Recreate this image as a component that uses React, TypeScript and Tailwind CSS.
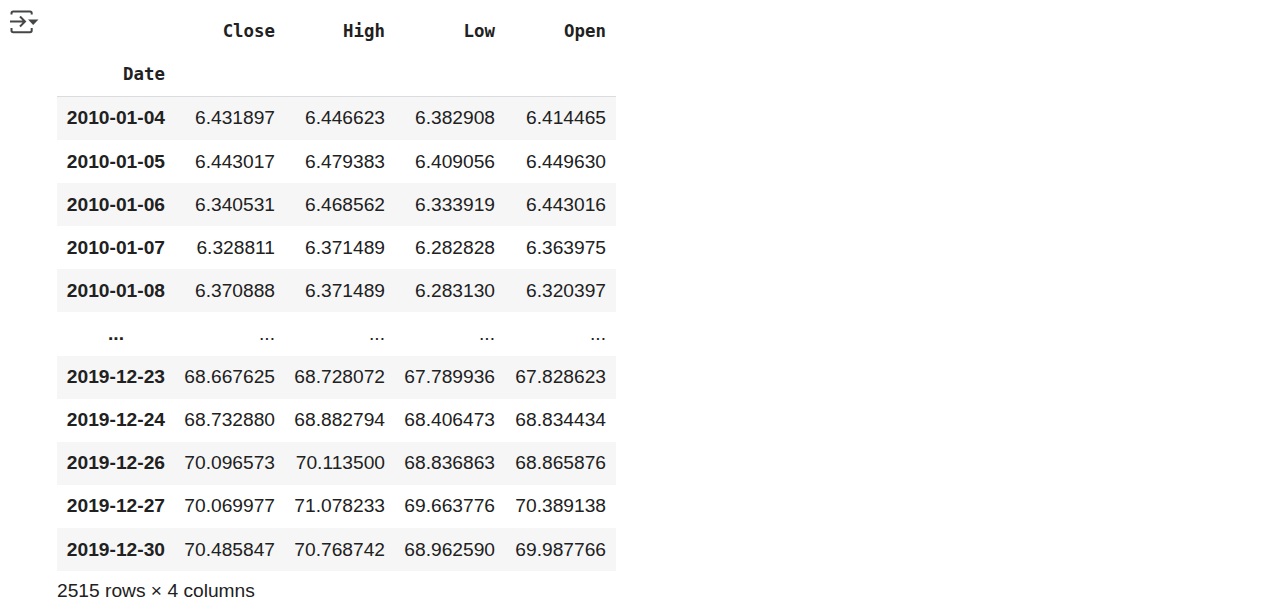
const columns = ["Close", "High", "Low", "Open"];

const firstRows = [
  ["2010-01-04", "6.431897", "6.446623", "6.382908", "6.414465"],
  ["2010-01-05", "6.443017", "6.479383", "6.409056", "6.449630"],
  ["2010-01-06", "6.340531", "6.468562", "6.333919", "6.443016"],
  ["2010-01-07", "6.328811", "6.371489", "6.282828", "6.363975"],
  ["2010-01-08", "6.370888", "6.371489", "6.283130", "6.320397"],
];

const lastRows = [
  ["2019-12-23", "68.667625", "68.728072", "67.789936", "67.828623"],
  ["2019-12-24", "68.732880", "68.882794", "68.406473", "68.834434"],
  ["2019-12-26", "70.096573", "70.113500", "68.836863", "68.865876"],
  ["2019-12-27", "70.069977", "71.078233", "69.663776", "70.389138"],
  ["2019-12-30", "70.485847", "70.768742", "68.962590", "69.987766"],
];

function OutputIcon() {
  return (
    <svg width="30" height="24" viewBox="0 0 30 24" fill="none" className="block">
      <path d="M1.5 4.5V3.2C1.5 2.2 2.2 1.5 3.2 1.5H20C21 1.5 21.7 2.2 21.7 3.2V4.5" stroke="#444746" strokeWidth="2" />
      <path d="M1.5 18V20.6C1.5 21.6 2.2 22.3 3.2 22.3H20C21 22.3 21.7 21.6 21.7 20.6V18" stroke="#444746" strokeWidth="2" />
      <path d="M0 11.5H14.5M10 6.5L15 11.5L10 16.5" stroke="#444746" strokeWidth="2" />
      <path d="M18 9.5H28.5L23.2 15Z" fill="#444746" />
    </svg>
  );
}

// low: the reference rounds some rows' text one pixel further down
function DataRow({ row, shaded, low }: { row: string[]; shaded: boolean; low: boolean }) {
  const pad = low ? "pt-[2px] pr-2.5 text-right whitespace-nowrap" : "pr-2.5 text-right whitespace-nowrap";
  return (
    <tr className={shaded ? "h-[43px] bg-[#f6f6f6]" : "h-[43px]"}>
      {row.map((cell, i) =>
        i === 0 ? (
          <th key={i} className={pad + " font-bold"}>{cell}</th>
        ) : (
          <td key={i} className={pad}>{cell}</td>
        )
      )}
    </tr>
  );
}

export default function App() {
  return (
    <div className="flex h-[606px] w-[1282px] overflow-hidden bg-white font-['Liberation_Sans',sans-serif] text-[19.2px] text-[#212121]">
      <div className="w-[57px] shrink-0 pt-[10px] pl-[10px]">
        <OutputIcon />
      </div>
      <div className="pt-[10px]">
        <table className="w-[559px] table-fixed border-separate border-spacing-0">
          <colgroup>
            <col className="w-[118px]" />
            <col className="w-[110px]" />
            <col className="w-[110px]" />
            <col className="w-[110px]" />
            <col className="w-[111px]" />
          </colgroup>
          <thead className="font-['DejaVu_Sans_Mono',monospace] text-[17.4px]">
            <tr className="h-[43px]">
              <th />
              {columns.map((c) => (
                <th key={c} className="pr-2.5 text-right font-bold">{c}</th>
              ))}
            </tr>
            <tr className="h-[44px]">
              <th className="border-b border-[#dadce0] pr-2.5 text-right font-bold">Date</th>
              <th colSpan={4} className="border-b border-[#dadce0]" />
            </tr>
          </thead>
          <tbody>
            {firstRows.map((row, i) => (
              <DataRow key={row[0]} row={row} shaded={i % 2 === 0} low={i > 0} />
            ))}
            <tr className="h-[44px]">
              <th className="pr-[51px] text-right font-bold">...</th>
              {columns.map((c) => (
                <td key={c} className="pr-2.5 text-right">...</td>
              ))}
            </tr>
            {lastRows.map((row, i) => (
              <DataRow key={row[0]} row={row} shaded={i % 2 === 0} low={i === 4} />
            ))}
          </tbody>
        </table>
        <p className="mt-[8px] leading-[24px]">2515 rows × 4 columns</p>
      </div>
    </div>
  );
}
